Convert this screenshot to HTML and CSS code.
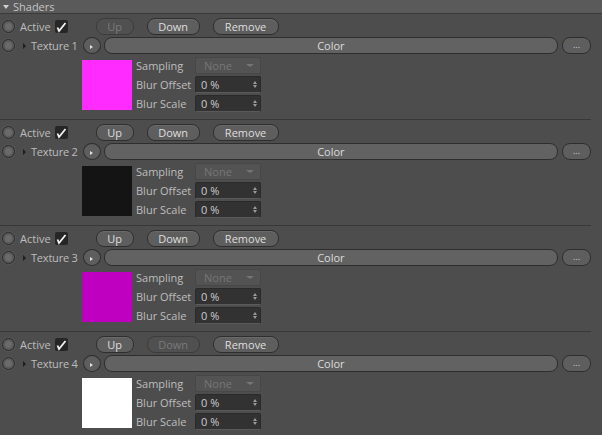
FILE: index.html
```html
<!DOCTYPE html>
<html lang="en">
<head>
    <meta charset="UTF-8">
    <title>Shaders</title>
    <link rel="stylesheet" href="styles.css">
</head>
<body>

    <div class="section-head">
        <span class="fold-down"></span>
        <span>Shaders</span>
    </div>

    <div class="shader-group">
        <div class="row">
            <span class="radio"></span>
            <span class="label">Active</span>
            <span class="check"><svg width="12" height="12" viewBox="0 0 12 12"><path d="M2.5 6.5 L4 10 L10.5 2" fill="none" stroke="#f2f2f2" stroke-width="1.8"/></svg></span>
            <button class="btn btn-up" disabled>Up</button>
            <button class="btn btn-down">Down</button>
            <button class="btn btn-remove">Remove</button>
        </div>
        <div class="row">
            <span class="radio"></span>
            <span class="fold-right"></span>
            <span class="label tex-name">Texture 1</span>
            <span class="round-btn"><span class="tiny-arrow"></span></span>
            <span class="color-bar">Color</span>
            <span class="dots-btn">...</span>
        </div>
        <div class="sub">
            <div class="swatch" style="background:#ff2bff"></div>
            <div class="params">
                <span class="label">Sampling</span><span class="select">None<span class="caret"></span></span>
                <span class="label">Blur Offset</span><span class="num">0 %<span class="spin"></span></span>
                <span class="label">Blur Scale</span><span class="num">0 %<span class="spin"></span></span>
            </div>
        </div>
    </div>

    <div class="shader-group">
        <div class="row">
            <span class="radio"></span>
            <span class="label">Active</span>
            <span class="check"><svg width="12" height="12" viewBox="0 0 12 12"><path d="M2.5 6.5 L4 10 L10.5 2" fill="none" stroke="#f2f2f2" stroke-width="1.8"/></svg></span>
            <button class="btn btn-up">Up</button>
            <button class="btn btn-down">Down</button>
            <button class="btn btn-remove">Remove</button>
        </div>
        <div class="row">
            <span class="radio"></span>
            <span class="fold-right"></span>
            <span class="label tex-name">Texture 2</span>
            <span class="round-btn"><span class="tiny-arrow"></span></span>
            <span class="color-bar">Color</span>
            <span class="dots-btn">...</span>
        </div>
        <div class="sub">
            <div class="swatch" style="background:#141414"></div>
            <div class="params">
                <span class="label">Sampling</span><span class="select">None<span class="caret"></span></span>
                <span class="label">Blur Offset</span><span class="num">0 %<span class="spin"></span></span>
                <span class="label">Blur Scale</span><span class="num">0 %<span class="spin"></span></span>
            </div>
        </div>
    </div>

    <div class="shader-group">
        <div class="row">
            <span class="radio"></span>
            <span class="label">Active</span>
            <span class="check"><svg width="12" height="12" viewBox="0 0 12 12"><path d="M2.5 6.5 L4 10 L10.5 2" fill="none" stroke="#f2f2f2" stroke-width="1.8"/></svg></span>
            <button class="btn btn-up">Up</button>
            <button class="btn btn-down">Down</button>
            <button class="btn btn-remove">Remove</button>
        </div>
        <div class="row">
            <span class="radio"></span>
            <span class="fold-right"></span>
            <span class="label tex-name">Texture 3</span>
            <span class="round-btn"><span class="tiny-arrow"></span></span>
            <span class="color-bar">Color</span>
            <span class="dots-btn">...</span>
        </div>
        <div class="sub">
            <div class="swatch" style="background:#c000c0"></div>
            <div class="params">
                <span class="label">Sampling</span><span class="select">None<span class="caret"></span></span>
                <span class="label">Blur Offset</span><span class="num">0 %<span class="spin"></span></span>
                <span class="label">Blur Scale</span><span class="num">0 %<span class="spin"></span></span>
            </div>
        </div>
    </div>

    <div class="shader-group">
        <div class="row">
            <span class="radio"></span>
            <span class="label">Active</span>
            <span class="check"><svg width="12" height="12" viewBox="0 0 12 12"><path d="M2.5 6.5 L4 10 L10.5 2" fill="none" stroke="#f2f2f2" stroke-width="1.8"/></svg></span>
            <button class="btn btn-up">Up</button>
            <button class="btn btn-down" disabled>Down</button>
            <button class="btn btn-remove">Remove</button>
        </div>
        <div class="row">
            <span class="radio"></span>
            <span class="fold-right"></span>
            <span class="label tex-name">Texture 4</span>
            <span class="round-btn"><span class="tiny-arrow"></span></span>
            <span class="color-bar">Color</span>
            <span class="dots-btn">...</span>
        </div>
        <div class="sub">
            <div class="swatch" style="background:#ffffff"></div>
            <div class="params">
                <span class="label">Sampling</span><span class="select">None<span class="caret"></span></span>
                <span class="label">Blur Offset</span><span class="num">0 %<span class="spin"></span></span>
                <span class="label">Blur Scale</span><span class="num">0 %<span class="spin"></span></span>
            </div>
        </div>
    </div>

</body>
</html>
```

FILE: styles.css
```css
body {
    margin: 0;
    background-color: #4d4d4d;
    color: #bdbdbd;
    font-family: 'Open Sans', 'Noto Sans', sans-serif;
    font-size: 11px;
    overflow: hidden;
}

.section-head {
    display: flex;
    align-items: center;
    gap: 4px;
    height: 13px;
    padding-left: 3px;
    background-color: #5a5a5a;
    border-bottom: 1px solid #3a3a3a;
    color: #c4c4c4;
    line-height: 13px;
}

.fold-down {
    width: 0;
    height: 0;
    border-left: 3px solid transparent;
    border-right: 3px solid transparent;
    border-top: 4px solid #d0d0d0;
}

.shader-group {
    display: flex;
    flex-direction: column;
    gap: 2px;
    padding: 4px 0 6px 0;
    margin-right: 11px;
    border-bottom: 1px solid #383838;
}

.row {
    display: flex;
    align-items: center;
    height: 17px;
}

.radio {
    box-sizing: border-box;
    width: 13px;
    height: 13px;
    margin-left: 2px;
    border-radius: 50%;
    border: 1px solid #2c2c2c;
    background: radial-gradient(circle, #6a6a6a 0, #6a6a6a 3px, #5a5a5a 4px);
    box-shadow: 0 0 0 1px #555;
}

.label {
    color: #bdbdbd;
    white-space: nowrap;
}

.row > .label {
    margin-left: 5px;
}

.check {
    box-sizing: border-box;
    display: flex;
    align-items: center;
    justify-content: center;
    width: 13px;
    height: 13px;
    margin-left: 4px;
    background-color: #262626;
    border-radius: 2px;
}

.btn {
    box-sizing: border-box;
    height: 17px;
    padding: 0;
    font-family: inherit;
    font-size: 11px;
    color: #dedede;
    background-color: #5e5e5e;
    border: 1px solid #2e2e2e;
    border-radius: 8px;
    box-shadow: inset 0 1px 0 #6a6a6a;
}

.btn:disabled {
    color: #7a7a7a;
    background-color: #505050;
    border-color: #3c3c3c;
    box-shadow: none;
}

.btn-up {
    width: 38px;
    margin-left: 28px;
}

.btn-down {
    width: 53px;
    margin-left: 13px;
}

.btn-remove {
    width: 66px;
    margin-left: 13px;
}

.fold-right {
    width: 0;
    height: 0;
    margin-left: 8px;
    border-top: 3px solid transparent;
    border-bottom: 3px solid transparent;
    border-left: 3px solid #1e1e1e;
}

.row > .tex-name {
    margin-left: 5px;
    letter-spacing: -0.2px;
}

.round-btn {
    box-sizing: border-box;
    display: flex;
    align-items: center;
    justify-content: center;
    width: 18px;
    height: 17px;
    margin-left: 5px;
    border-radius: 50%;
    background-color: #5e5e5e;
    border: 1px solid #2e2e2e;
}

.tiny-arrow {
    width: 0;
    height: 0;
    margin-top: 2px;
    border-top: 2px solid transparent;
    border-bottom: 2px solid transparent;
    border-left: 3px solid #e0e0e0;
}

.color-bar {
    box-sizing: border-box;
    flex: 1;
    height: 17px;
    margin-left: 3px;
    border: 1px solid #2e2e2e;
    border-radius: 8px;
    background-color: #626262;
    color: #dcdcdc;
    text-align: center;
    line-height: 15px;
}

.dots-btn {
    box-sizing: border-box;
    width: 29px;
    height: 17px;
    margin-left: 4px;
    border: 1px solid #2e2e2e;
    border-radius: 8px;
    background-color: #5e5e5e;
    color: #c8d0e0;
    text-align: center;
    font-size: 9px;
    line-height: 13px;
}

.sub {
    display: flex;
    margin-top: 1px;
    padding-left: 82px;
}

.swatch {
    width: 50px;
    height: 50px;
    margin-top: 3px;
}

.params {
    display: grid;
    grid-template-columns: 59px 66px;
    grid-template-rows: 17px 17px 17px;
    row-gap: 2px;
    align-items: center;
    margin-left: 4px;
    padding-bottom: 1px;
}

.select,
.num {
    box-sizing: border-box;
    position: relative;
    height: 17px;
    padding-left: 5px;
    line-height: 15px;
    border-radius: 2px;
}

.select {
    color: #767676;
    background-color: #535353;
    border: 1px solid #474747;
    padding-left: 8px;
}

.caret {
    position: absolute;
    right: 6px;
    top: 6px;
    width: 0;
    height: 0;
    border-left: 4px solid transparent;
    border-right: 4px solid transparent;
    border-top: 3px solid #767676;
}

.num {
    color: #cccccc;
    background-color: #323232;
    border: 1px solid #2a2a2a;
    border-bottom-color: #5a5a5a;
}

.spin {
    position: absolute;
    right: 3px;
    top: 4px;
    width: 0;
    height: 0;
    border-left: 2px solid transparent;
    border-right: 2px solid transparent;
    border-bottom: 3px solid #9a9a9a;
}

.spin::after {
    content: '';
    position: absolute;
    left: -2px;
    top: 4px;
    border-left: 2px solid transparent;
    border-right: 2px solid transparent;
    border-top: 3px solid #9a9a9a;
}
```
